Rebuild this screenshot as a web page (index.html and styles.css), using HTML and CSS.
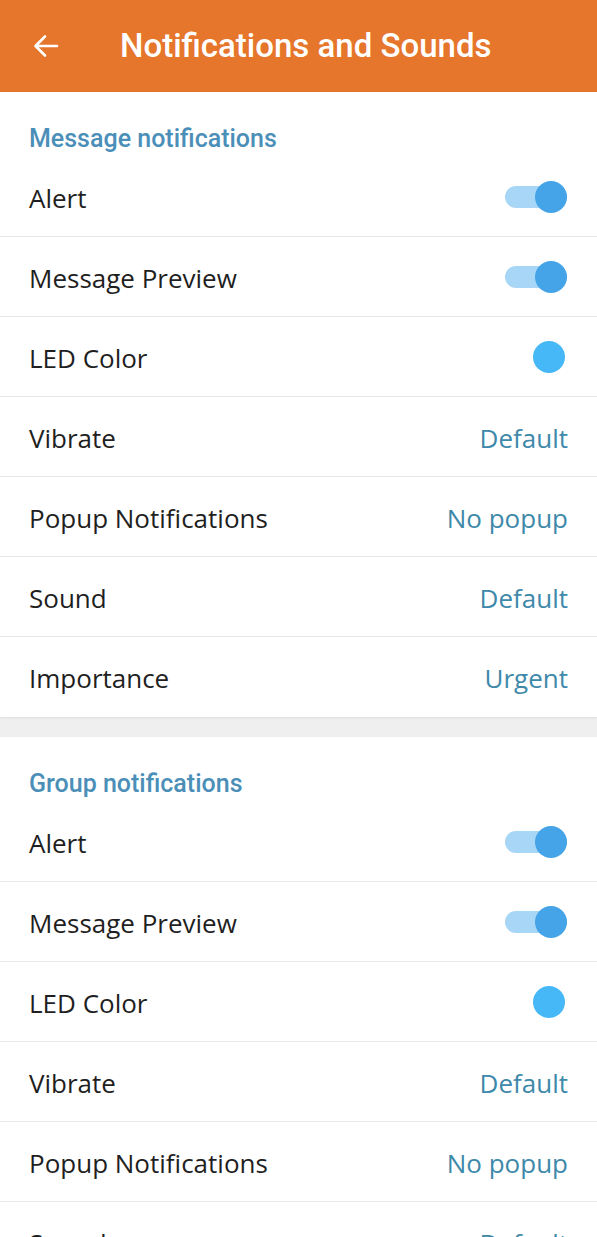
FILE: index.html
```html
<!DOCTYPE html>
<html>
<head>
<meta charset="utf-8">
<link rel="stylesheet" href="styles.css">
</head>
<body>
<header class="appbar">
  <svg class="back" width="28" height="28" viewBox="0 0 28 28"><path d="M25 14H4M13 4.5L3.5 14L13 23.5" fill="none" stroke="#fff" stroke-width="2.6" stroke-linecap="round" stroke-linejoin="round"/></svg>
  <h1 class="title">Notifications and Sounds</h1>
</header>
<section class="section first">
  <div class="sec-title">Message notifications</div>
  <div class="row"><span class="label">Alert</span><span class="toggle"><span class="thumb"></span></span></div>
  <div class="row"><span class="label">Message Preview</span><span class="toggle"><span class="thumb"></span></span></div>
  <div class="row"><span class="label">LED Color</span><span class="led"></span></div>
  <div class="row"><span class="label">Vibrate</span><span class="value">Default</span></div>
  <div class="row"><span class="label">Popup Notifications</span><span class="value">No popup</span></div>
  <div class="row"><span class="label">Sound</span><span class="value">Default</span></div>
  <div class="row"><span class="label">Importance</span><span class="value">Urgent</span></div>
</section>
<section class="section">
  <div class="sec-title">Group notifications</div>
  <div class="row"><span class="label">Alert</span><span class="toggle"><span class="thumb"></span></span></div>
  <div class="row"><span class="label">Message Preview</span><span class="toggle"><span class="thumb"></span></span></div>
  <div class="row"><span class="label">LED Color</span><span class="led"></span></div>
  <div class="row"><span class="label">Vibrate</span><span class="value">Default</span></div>
  <div class="row"><span class="label">Popup Notifications</span><span class="value">No popup</span></div>
  <div class="row"><span class="label">Sound</span><span class="value">Default</span></div>
  <div class="row"><span class="label">Importance</span><span class="value">Urgent</span></div>
</section>
</body>
</html>
```
FILE: styles.css
```css
* { box-sizing: border-box; }
html, body { margin: 0; padding: 0; }
body {
  background: #efefef;
  font-family: "Open Sans", "Noto Sans", sans-serif;
  width: 597px;
  overflow: hidden;
}
.appbar {
  height: 92px;
  background: #e6762b;
  display: flex;
  align-items: center;
  padding-left: 32px;
  box-shadow: 0 1px 2px rgba(0,0,0,0.15);
}
.title {
  margin: 0 0 0 60px;
  font-family: Roboto, "Liberation Sans", sans-serif;
  font-weight: 500;
  font-size: 33px;
  line-height: 40px;
  color: #fff;
}
.section {
  background: #fff;
  margin-top: 20px;
  box-shadow: 0 1px 2px rgba(0,0,0,0.08);
}
.section.first { margin-top: 0; }
.sec-title {
  height: 65px;
  padding: 32px 0 0 29px;
  font-family: Roboto, "Liberation Sans", sans-serif;
  font-weight: 500;
  font-size: 25px;
  line-height: 30px;
  color: #4b8fb8;
}
.row {
  height: 80px;
  display: flex;
  align-items: center;
  justify-content: space-between;
  padding: 0 29px;
  border-bottom: 1px solid #e8e8e8;
}
.row:last-child { border-bottom: none; }
.label {
  font-size: 26px;
  line-height: 34px;
  color: #1f1f1f;
  margin-top: 2px;
}
.value {
  font-size: 26px;
  line-height: 34px;
  color: #3e89aa;
  margin-top: 2px;
}
.toggle {
  position: relative;
  width: 62px;
  height: 22px;
  border-radius: 11px;
  background: #a8d6f6;
  margin-right: 1px;
}
.thumb {
  position: absolute;
  right: 0;
  top: -5px;
  width: 32px;
  height: 32px;
  border-radius: 50%;
  background: #45a3e8;
}
.led {
  width: 32px;
  height: 32px;
  border-radius: 50%;
  background: #46b8f7;
  margin-right: 3px;
}
```
